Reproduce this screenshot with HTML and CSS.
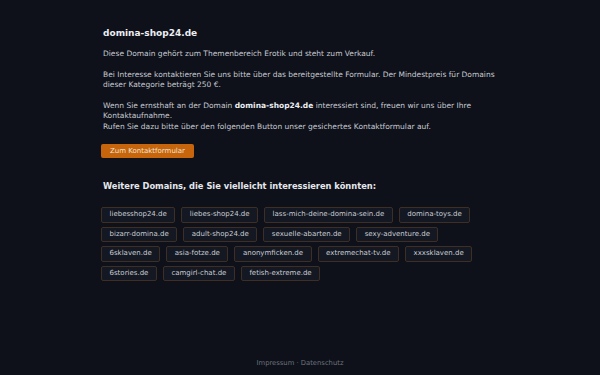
FILE: index.html
```html
<!DOCTYPE html>
<html lang="de">

<head>
    <meta charset="UTF-8">
    <meta name="viewport" content="width=device-width, initial-scale=1.0">
    <title>domina-shop24.de</title>
    <link rel="stylesheet" href="styles.css">
</head>

<body>
    <div class="page">
        <main class="content">
            <h1 class="title">domina-shop24.de</h1>
            <p>Diese Domain gehört zum Themenbereich Erotik und steht zum Verkauf.</p>
            <p>Bei Interesse kontaktieren Sie uns bitte über das bereitgestellte Formular. Der Mindestpreis für Domains dieser Kategorie beträgt 250 €.</p>
            <p>Wenn Sie ernsthaft an der Domain <strong>domina-shop24.de</strong> interessiert sind, freuen wir uns über Ihre Kontaktaufnahme.<br>
                Rufen Sie dazu bitte über den folgenden Button unser gesichertes Kontaktformular auf.</p>
            <a class="btn" href="#">Zum Kontaktformular</a>

            <h2 class="subtitle">Weitere Domains, die Sie vielleicht interessieren könnten:</h2>
            <div class="tags">
                <a class="tag" href="#">liebesshop24.de</a>
                <a class="tag" href="#">liebes-shop24.de</a>
                <a class="tag" href="#">lass-mich-deine-domina-sein.de</a>
                <a class="tag" href="#">domina-toys.de</a>
                <a class="tag" href="#">bizarr-domina.de</a>
                <a class="tag" href="#">adult-shop24.de</a>
                <a class="tag" href="#">sexuelle-abarten.de</a>
                <a class="tag" href="#">sexy-adventure.de</a>
                <a class="tag" href="#">6sklaven.de</a>
                <a class="tag" href="#">asia-fotze.de</a>
                <a class="tag" href="#">anonymficken.de</a>
                <a class="tag" href="#">extremechat-tv.de</a>
                <a class="tag" href="#">xxxsklaven.de</a>
                <a class="tag" href="#">6stories.de</a>
                <a class="tag" href="#">camgirl-chat.de</a>
                <a class="tag" href="#">fetish-extreme.de</a>
            </div>
        </main>
        <footer class="footer">
            <a href="#">Impressum</a> · <a href="#">Datenschutz</a>
        </footer>
    </div>
</body>

</html>
```

FILE: styles.css
```css
html,
body {
    margin: 0;
    padding: 0;
    height: 100%;
}

body {
    background-color: #0e111a;
    color: #c7cad1;
    font-family: "DejaVu Sans", sans-serif;
    font-size: 7.5px;
    line-height: 10.5px;
}

a {
    text-decoration: none;
    color: inherit;
}

.page {
    display: flex;
    flex-direction: column;
    min-height: 100%;
}

.content {
    flex: 1;
    width: 394px;
    margin: 0 auto;
    padding-top: 27px;
}

.title {
    margin: 0 0 10px;
    font-size: 9px;
    line-height: 12px;
    color: #eceef2;
}

.content p {
    margin: 0 0 10px;
}

.content strong {
    color: #eceef2;
}

.btn {
    display: inline-block;
    margin: 2px 0 0 -2px;
    padding: 2px 9px;
    background-color: #c6650c;
    color: #f3e3d2;
    border-radius: 2px;
    font-size: 7px;
    line-height: 10px;
}

.subtitle {
    margin: 22px 0 15px;
    font-size: 8.3px;
    line-height: 12px;
    color: #e6e8ec;
}

.tags {
    display: flex;
    flex-wrap: wrap;
    gap: 4px 6px;
    margin-left: -2px;
}

.tag {
    padding: 2px 7.5px;
    background-color: #141822;
    border: 1px solid #3e2e23;
    border-radius: 2px;
    font-size: 7px;
    line-height: 9.5px;
    color: #c9ccd3;
}

.footer {
    padding: 6px 0 7px;
    text-align: center;
    font-size: 6.8px;
    color: #6d717c;
}
```
